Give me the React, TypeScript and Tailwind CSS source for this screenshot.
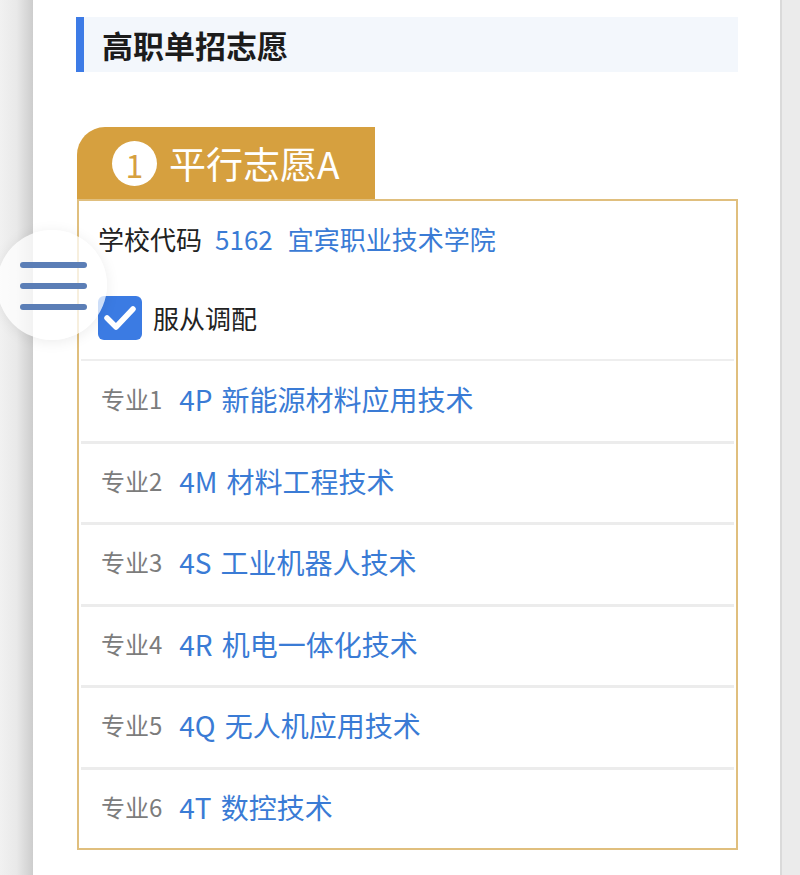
import { Fragment } from "react"

const majors = [
  { no: 1, code: "4P", name: "新能源材料应用技术" },
  { no: 2, code: "4M", name: "材料工程技术" },
  { no: 3, code: "4S", name: "工业机器人技术" },
  { no: 4, code: "4R", name: "机电一体化技术" },
  { no: 5, code: "4Q", name: "无人机应用技术" },
  { no: 6, code: "4T", name: "数控技术" },
]

export default function App() {
  return (
    <div className="relative flex min-h-[875px] bg-white font-['Noto_Sans_CJK_SC','Noto_Sans',sans-serif]">
      {/* left page edge */}
      <div className="w-[33px] shrink-0 bg-linear-to-r from-[#f1f1f1] via-[#e9e9e9] to-[#cdcdcd]" />

      <main className="flex-1 bg-white pl-[43px] pr-[42px] pt-[17px] pb-[26px]">
        {/* Section heading */}
        <div className="flex h-[55px] items-center border-l-[8px] border-[#3d7be6] bg-[#f3f7fc] pl-[18px]">
          <h2 className="text-[31px] font-bold leading-none text-[#1c1c1c]">高职单招志愿</h2>
        </div>

        {/* Tab */}
        <div className="mt-[55px] ml-px flex h-[73px] w-[298px] items-center rounded-tl-[28px] bg-[#d6a03f] pl-[35px]">
          <div className="flex h-[45px] w-[45px] items-center justify-center rounded-full bg-white text-[32px] leading-none text-[#d6a03f]">
            1
          </div>
          <span className="ml-[12px] text-[37px] leading-none text-white">平行志愿A</span>
        </div>

        {/* Choice box */}
        <div className="-mt-px ml-px border-2 border-[#e0bf7e]">
          <div className="px-[19px] pt-[20px] pb-[19px]">
            <div className="flex items-center text-[26px] leading-[36px] text-[#222]">
              <span>学校代码</span>
              <span className="ml-[13px] text-[#3a7bd5]">5162</span>
              <span className="ml-[15px] text-[#3a7bd5]">宜宾职业技术学院</span>
            </div>
            <div className="mt-[39px] flex items-center">
              <div className="flex h-[44px] w-[44px] items-center justify-center rounded-[6px] bg-[#3b7be3]">
                <svg width="44" height="44" viewBox="0 0 44 44" fill="none">
                  <polyline
                    points="9,22 18,31 35,13"
                    stroke="white"
                    strokeWidth="5.5"
                    strokeLinecap="round"
                    strokeLinejoin="round"
                  />
                </svg>
              </div>
              <span className="ml-[11px] text-[26px] leading-none text-[#222]">服从调配</span>
            </div>
          </div>

          {majors.map((m, i) => (
            <Fragment key={m.no}>
              <div
                className={
                  i === 0
                    ? "mx-[2px] flex h-[81.5px] items-center border-t-2 border-[#eeeeee] pl-[20px] pb-[4px]"
                    : "mx-[2px] flex h-[81.5px] items-center border-t-[3px] border-[#ececec] pl-[20px] pb-[4px]"
                }
              >
                <span className="text-[24px] text-[#7c7c7c]">专业{m.no}</span>
                <span className="ml-[17px] text-[28px] text-[#3a7bd5]">{m.code}</span>
                <span className="ml-[9px] text-[28px] text-[#3a7bd5]">{m.name}</span>
              </div>
            </Fragment>
          ))}
        </div>
      </main>

      {/* right page edge */}
      <div className="w-[20px] shrink-0 border-l-2 border-[#dadada] bg-[#ebebeb]" />

      {/* floating menu button */}
      <div className="absolute left-[-3px] top-[230px] h-[110px] w-[110px] rounded-full bg-white/75 shadow-[0_2px_14px_rgba(0,0,0,0.08)]">
        <div className="absolute left-[23px] top-[32px] flex w-[67px] flex-col gap-[15px]">
          <div className="h-[6px] rounded-full bg-[#5b7eb6]" />
          <div className="h-[6px] rounded-full bg-[#5b7eb6]" />
          <div className="h-[6px] rounded-full bg-[#5b7eb6]" />
        </div>
      </div>
    </div>
  )
}
